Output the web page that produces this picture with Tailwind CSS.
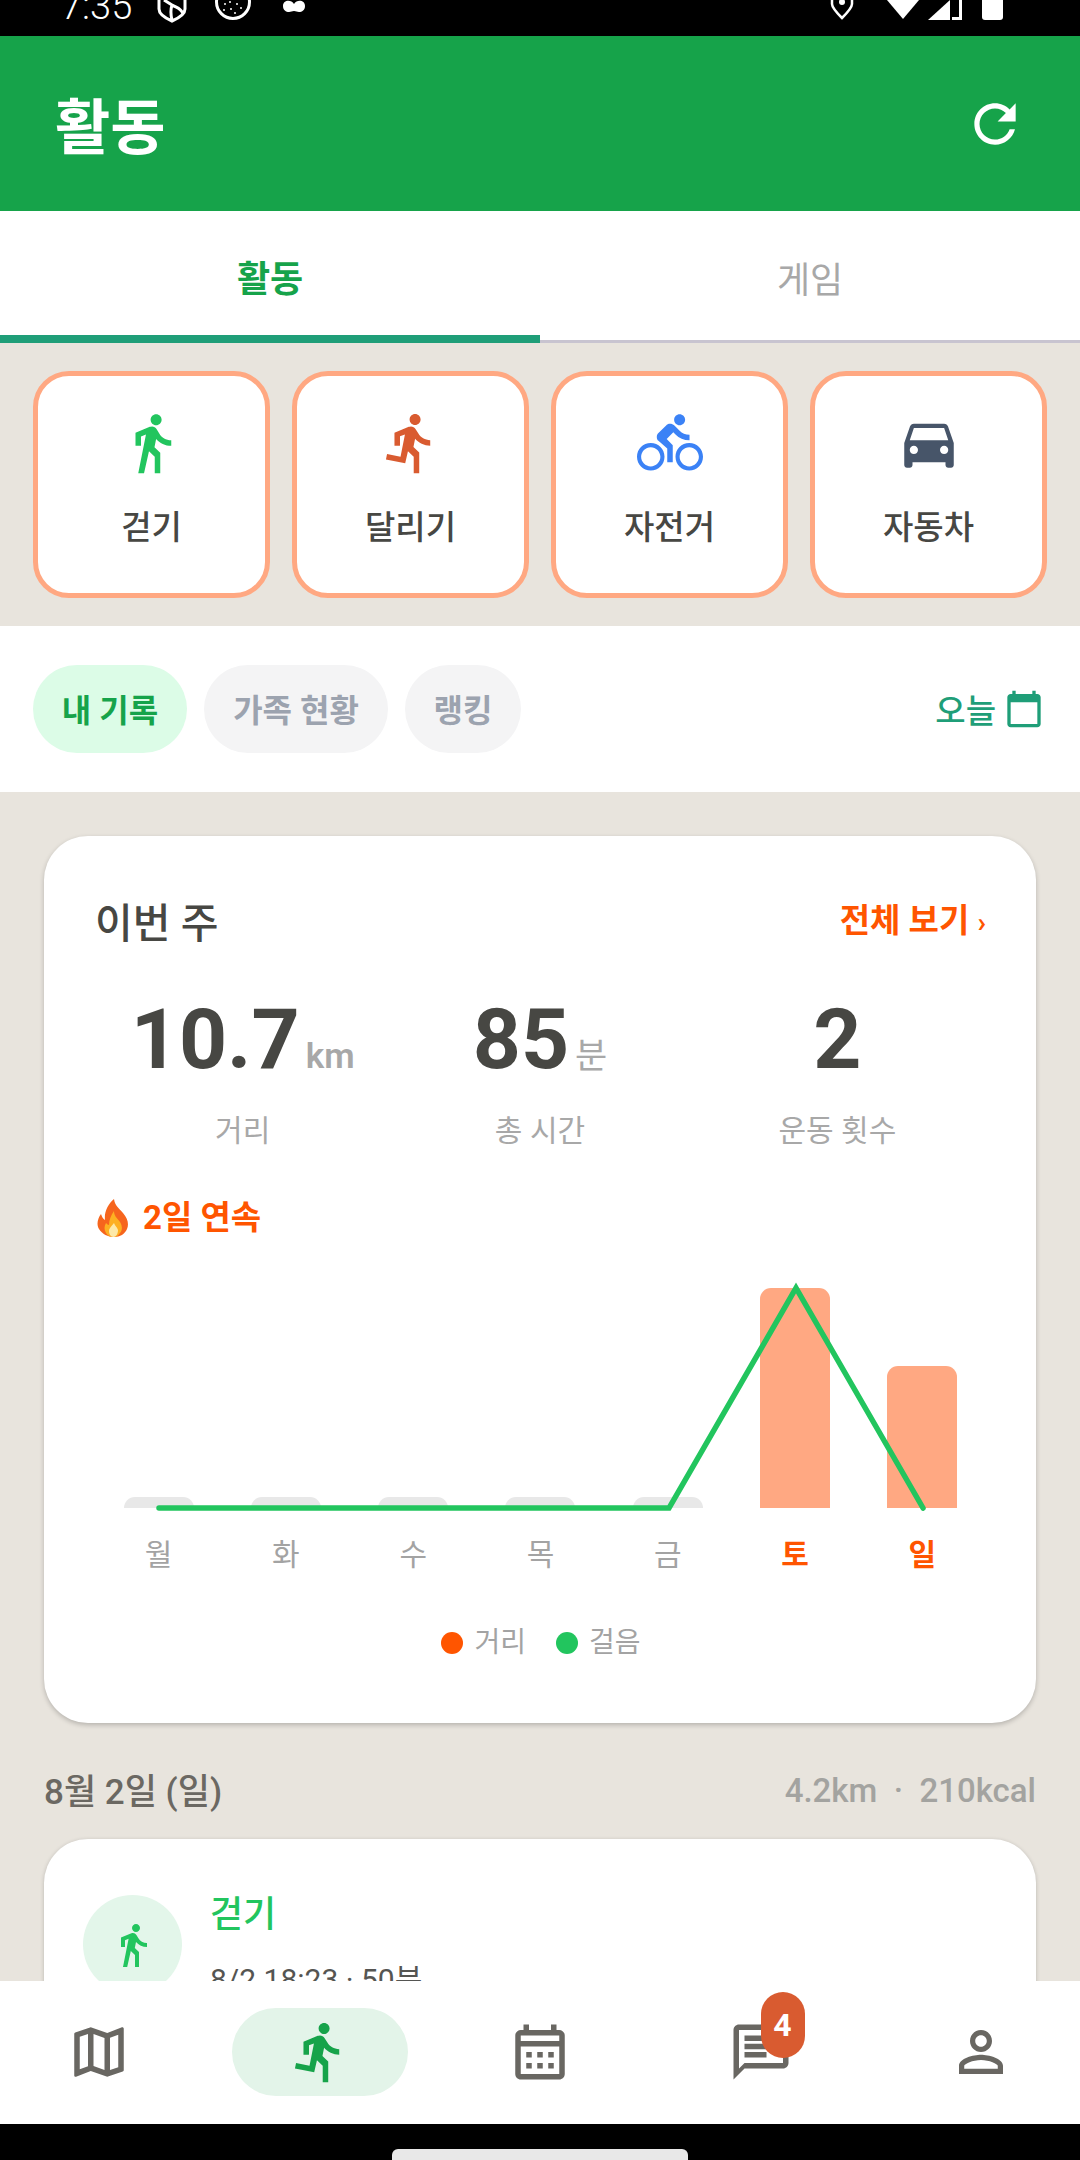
<!DOCTYPE html>
<html lang="ko">
<head>
  <meta charset="UTF-8">
  <title>활동</title>
  <script src="https://cdn.jsdelivr.net/npm/@tailwindcss/browser@4"></script>
</head>
<body class="bg-black font-[Roboto,'Noto_Sans_CJK_KR',sans-serif]">
  <div class="flex flex-col w-[1080px] h-[2160px] overflow-hidden">

    <!-- status bar -->
    <div class="h-[36px] shrink-0 bg-black flex items-start overflow-hidden text-white">
      <span class="ml-[61px] w-[96px] mt-[-16px] text-[38px] leading-[44px] font-light">7:35</span>
      <svg class="w-[30px] h-[36px]" viewBox="0 0 30 36" fill="none" stroke="white" stroke-width="3"><path d="M2 -6v15c0 5 6 9 13 12 7-3 13-7 13-12V-6M7 0l8 5c5 3 9 3 11 9M15 5c-2 6-1 11 0 15"/></svg>
      <svg class="ml-[28px] w-[36px] h-[36px]" viewBox="0 0 36 36" fill="none" stroke="white"><circle cx="18" cy="2" r="16.500" stroke-width="3"/><g fill="white" stroke="none"><circle cx="10" cy="4" r="1"/><circle cx="16" cy="9" r="1"/><circle cx="22" cy="4" r="1"/><circle cx="26" cy="8" r="1"/><circle cx="15" cy="2" r="1"/><circle cx="9" cy="10" r="1"/><circle cx="20" cy="13" r="1"/></g></svg>
      <svg class="ml-[30px] w-[26px] h-[36px]" viewBox="0 0 24 36" fill="white"><path d="M12 4C9 -1 1 0 1 6c0 4 3 6 6 6 2 0 3-1 5-1s3 1 5 1c3 0 6-2 6-6 0-6-8-7-11-2z"/></svg>
      <svg class="ml-[523px] w-[24px] h-[36px]" viewBox="0 0 24 36" fill="none" stroke="white" stroke-width="2.500"><path d="M2 -4v8c0 4 6 10 10 14 4-4 10-10 10-14v-8"/><circle cx="12" cy="2" r="3" fill="white" stroke="none"/></svg>
      <svg class="ml-[33px] w-[32px] h-[36px]" viewBox="0 0 32 36" fill="white"><path d="M0 0h32L16 19z"/></svg>
      <svg class="ml-[9px] w-[34px] h-[36px]" viewBox="0 0 34 36" fill="white"><path d="M0 20 22 0v20z"/><path d="M24 0h10v20H24v-3h7V0h-7z"/></svg>
      <svg class="ml-[20px] w-[21px] h-[36px]" viewBox="0 0 21 36" fill="white"><path d="M0 0h21v17c0 2-1 3-3 3H3c-2 0-3-1-3-3z"/></svg>
    </div>

    <!-- app bar -->
    <header class="h-[175px] shrink-0 bg-[#16a34a] flex items-center justify-between pl-[55px] pr-[54px]">
      <h1 class="pt-[10px] text-[60px] leading-none font-bold text-white">활동</h1>
      <svg class="w-[62px] h-[62px]" viewBox="0 0 24 24" fill="white"><path d="M17.65 6.35C16.2 4.9 14.21 4 12 4c-4.42 0-7.99 3.58-7.99 8s3.57 8 7.99 8c3.73 0 6.84-2.55 7.73-6h-2.08c-.82 2.33-3.04 4-5.65 4-3.31 0-6-2.69-6-6s2.69-6 6-6c1.66 0 3.14.69 4.22 1.78L13 11h7V4l-2.35 2.35z"/></svg>
    </header>

    <!-- tabs -->
    <div class="h-[132px] shrink-0 bg-white flex border-b-[3px] border-[#c8c4d0]">
      <div class="w-1/2 h-[132px] flex items-center justify-center pt-[14px] border-b-[8px] border-[#1f9e78] text-[36px] font-bold text-[#16a34a]">활동</div>
      <div class="w-1/2 h-[129px] flex items-center justify-center pt-[10px] text-[36px] text-[#a8a8a8]">게임</div>
    </div>

    <main class="flex-1 min-h-0 overflow-hidden bg-[#e8e4dd]">
      <!-- activity types -->
      <div class="grid grid-cols-4 gap-[22px] px-[33px] pt-[28px] pb-[28px]">
        <div class="h-[227px] bg-white rounded-[36px] border-[5px] border-[#ffa882] flex flex-col items-center pt-[34px]">
          <svg class="w-[66px] h-[66px]" viewBox="0 0 24 24" fill="#22c55e"><path d="M13.5 5.5c1.1 0 2-.9 2-2s-.9-2-2-2-2 .9-2 2 .9 2 2 2zM9.8 8.9L7 23h2.1l1.8-8 2.1 2v6h2v-7.5l-2.1-2 .6-3C14.8 12 16.8 13 19 13v-2c-1.9 0-3.5-1-4.3-2.4l-1-1.6c-.4-.6-1-1-1.7-1-.3 0-.5.1-.8.1L6 8.3V13h2V9.6l1.8-.7"/></svg>
          <span class="mt-[30px] text-[33px] leading-[44px] font-medium text-[#474743]">걷기</span>
        </div>
        <div class="h-[227px] bg-white rounded-[36px] border-[5px] border-[#ffa882] flex flex-col items-center pt-[34px]">
          <svg class="w-[66px] h-[66px]" viewBox="0 0 24 24" fill="#d95b30"><path d="M13.49 5.48c1.1 0 2-.9 2-2s-.9-2-2-2-2 .9-2 2 .9 2 2 2zm-3.6 13.9l1-4.4 2.1 2v6h2v-7.5l-2.1-2 .6-3c1.3 1.5 3.3 2.5 5.5 2.5v-2c-1.9 0-3.5-1-4.3-2.4l-1-1.6c-.4-.6-1-1-1.7-1-.3 0-.5.1-.8.1l-5.2 2.2v4.7h2v-3.4l1.8-.7-1.6 8.1-4.9-1-.4 2 7 1.4z"/></svg>
          <span class="mt-[30px] text-[33px] leading-[44px] font-medium text-[#474743]">달리기</span>
        </div>
        <div class="h-[227px] bg-white rounded-[36px] border-[5px] border-[#ffa882] flex flex-col items-center pt-[34px]">
          <svg class="w-[66px] h-[66px]" viewBox="0 0 24 24" fill="#3b82f6"><path d="M15.5 5.5c1.1 0 2-.9 2-2s-.9-2-2-2-2 .9-2 2 .9 2 2 2zM5 12c-2.8 0-5 2.2-5 5s2.2 5 5 5 5-2.2 5-5-2.2-5-5-5zm0 8.5c-1.9 0-3.5-1.6-3.5-3.5s1.6-3.5 3.5-3.5 3.5 1.6 3.5 3.5-1.6 3.5-3.5 3.5zm5.8-10l2.4-2.4.8.8c1.3 1.3 3 2.1 5.1 2.1V9c-1.5 0-2.7-.6-3.6-1.5l-1.9-1.9c-.5-.4-1-.6-1.6-.6s-1.1.2-1.4.6L7.8 8.4c-.4.4-.6.9-.6 1.4 0 .6.2 1.1.6 1.4L11 14v5h2v-6.2l-2.2-2.3zM19 12c-2.8 0-5 2.2-5 5s2.2 5 5 5 5-2.2 5-5-2.2-5-5-5zm0 8.5c-1.9 0-3.5-1.6-3.5-3.5s1.6-3.5 3.5-3.5 3.5 1.6 3.5 3.5-1.6 3.5-3.5 3.5z"/></svg>
          <span class="mt-[30px] text-[33px] leading-[44px] font-medium text-[#474743]">자전거</span>
        </div>
        <div class="h-[227px] bg-white rounded-[36px] border-[5px] border-[#ffa882] flex flex-col items-center pt-[34px]">
          <svg class="w-[66px] h-[66px]" viewBox="0 0 24 24" fill="#475569"><path d="M18.92 6.01C18.72 5.42 18.16 5 17.5 5h-11c-.66 0-1.21.42-1.42 1.01L3 12v8c0 .55.45 1 1 1h1c.55 0 1-.45 1-1v-1h12v1c0 .55.45 1 1 1h1c.55 0 1-.45 1-1v-8l-2.08-5.99zM6.5 16c-.83 0-1.5-.67-1.5-1.5S5.67 13 6.5 13s1.5.67 1.5 1.5S7.33 16 6.5 16zm11 0c-.83 0-1.5-.67-1.5-1.5s.67-1.5 1.5-1.5 1.5.67 1.5 1.5-.67 1.5-1.5 1.5zM5 11l1.5-4.5h11L19 11H5z"/></svg>
          <span class="mt-[30px] text-[33px] leading-[44px] font-medium text-[#474743]">자동차</span>
        </div>
      </div>

      <!-- filter chips -->
      <div class="h-[166px] bg-white flex items-center pl-[33px] pr-[36px]">
        <div class="flex gap-[17px] text-[32px] font-semibold">
          <span class="h-[88px] w-[154px] pt-[4px] flex items-center justify-center rounded-full bg-[#dcfce7] text-[#16a34a]">내 기록</span>
          <span class="h-[88px] w-[184px] pt-[4px] flex items-center justify-center rounded-full bg-[#f4f4f5] text-[#9ca3af]">가족 현황</span>
          <span class="h-[88px] w-[116px] pt-[4px] flex items-center justify-center rounded-full bg-[#f4f4f5] text-[#9ca3af]">랭킹</span>
        </div>
        <div class="ml-auto flex items-center gap-[8px] text-[33px] font-medium text-[#1f9e78]">
          <span class="pt-[6px]">오늘</span>
          <svg class="w-[40px] h-[40px]" viewBox="0 0 24 24" fill="#1f9e78"><path d="M20 3h-1V1h-2v2H7V1H5v2H4c-1.1 0-2 .9-2 2v16c0 1.1.9 2 2 2h16c1.1 0 2-.9 2-2V5c0-1.1-.9-2-2-2zm0 18H4V8h16v13z"/></svg>
        </div>
      </div>

      <!-- weekly summary -->
      <section class="mx-[44px] mt-[44px] h-[887px] bg-white rounded-[44px] shadow-[0_2px_5px_rgba(0,0,0,0.22)] px-[50px] pt-[61px]">
        <div class="flex items-center justify-between pl-[1px] h-[48px]">
          <h2 class="pt-[5px] text-[41px] leading-[48px] font-medium text-[#474743]">이번 주</h2>
          <span class="text-[33px] font-bold text-[#ff5500]">전체 보기 <span class="text-[28px]">›</span></span>
        </div>

        <div class="grid grid-cols-3 mt-[53px] text-center">
          <div class="flex items-baseline justify-center gap-[6px] h-[84px] leading-[84px]">
            <span class="text-[84px] font-bold text-[#474743]">10.7</span><span class="text-[35px] font-semibold text-[#a8a8a8]">km</span>
          </div>
          <div class="flex items-baseline justify-center gap-[6px] h-[84px] leading-[84px]">
            <span class="text-[84px] font-bold text-[#474743]">85</span><span class="text-[35px] text-[#a8a8a8]">분</span>
          </div>
          <div class="h-[84px] leading-[84px] text-[84px] font-bold text-[#474743]">2</div>
          <div class="mt-[27px] text-[30px] leading-[44px] text-[#a8a8a8]">거리</div>
          <div class="mt-[27px] text-[30px] leading-[44px] text-[#a8a8a8]">총 시간</div>
          <div class="mt-[27px] text-[30px] leading-[44px] text-[#a8a8a8]">운동 횟수</div>
        </div>

        <div class="mt-[43px] h-[44px] flex items-center gap-[13px] text-[33px] leading-[44px] font-bold text-[#ff5500] pl-[3px]">
          <svg class="w-[33px] h-[38px]" viewBox="0 0 33 38">
            <path d="M17 0c1 7 5 9 9 14 5 6 6 11 4 16-2 5-7 8-13 8S5 35 2 30c-3-5-1-11 2-15 1 3 2 5 4 6C7 13 11 5 17 0z" fill="#f6651d"/>
            <path d="M17 12c0 5 3 7 6 11 3 5 2 9 0 11-2 3-4 4-6.500 4S11 37 9 34c-2-3-2-7 0-10 1 1 2 2 3 2 0-5 2-10 5-14z" fill="#fdb022"/>
            <path d="M17 24c1 3 3 4 4 7 0 4-2 7-4.500 7S12 35 12 32c0-3 3-5 5-8z" fill="#fde9a8"/>
          </svg>
          <span>2일 연속</span>
        </div>

        <!-- chart -->
        <div class="relative mt-[48px] ml-[1px] h-[220px] grid grid-cols-7 items-end">
          <div class="mx-auto w-[70px] h-[11px] rounded-t-[11px] bg-[#e8e8e8]"></div>
          <div class="mx-auto w-[70px] h-[11px] rounded-t-[11px] bg-[#e8e8e8]"></div>
          <div class="mx-auto w-[70px] h-[11px] rounded-t-[11px] bg-[#e8e8e8]"></div>
          <div class="mx-auto w-[70px] h-[11px] rounded-t-[11px] bg-[#e8e8e8]"></div>
          <div class="mx-auto w-[70px] h-[11px] rounded-t-[11px] bg-[#e8e8e8]"></div>
          <div class="mx-auto w-[70px] h-[220px] rounded-t-[11px] bg-[#ffa882]"></div>
          <div class="mx-auto w-[70px] h-[142px] rounded-t-[11px] bg-[#ffa882]"></div>
          <svg class="absolute left-0 top-0 w-[892px] h-[220px] overflow-visible" viewBox="0 0 892 220" fill="none">
            <path d="M64 220H574L701 0 828 220" stroke="#22c55e" stroke-width="5.500" stroke-linecap="round"/>
          </svg>
        </div>
        <div class="grid grid-cols-7 mt-[25px] ml-[1px] text-center text-[30px] leading-[44px] text-[#a3a3a3]">
          <span>월</span><span>화</span><span>수</span><span>목</span><span>금</span>
          <span class="font-bold text-[#ff5500]">토</span><span class="font-bold text-[#ff5500]">일</span>
        </div>

        <div class="mt-[46px] ml-[2px] flex items-center justify-center gap-[30px] text-[28px] leading-[40px] text-[#a3a3a3]">
          <span class="flex items-center gap-[11px]"><i class="w-[22px] h-[22px] rounded-full bg-[#ff5500]"></i>거리</span>
          <span class="flex items-center gap-[11px]"><i class="w-[22px] h-[22px] rounded-full bg-[#22c55e]"></i>걸음</span>
        </div>
      </section>

      <!-- day header -->
      <div class="mx-[44px] mt-[45px] h-[50px] flex items-center justify-between">
        <span class="text-[35px] font-medium text-[#6b6862]">8월 2일 (일)</span>
        <span class="pb-[5px] text-[33px] font-medium text-[#a3a3a0]">4.2km &nbsp;·&nbsp; 210kcal</span>
      </div>

      <!-- activity row -->
      <div class="mx-[44px] mt-[21px] h-[400px] bg-white rounded-[44px] shadow-[0_1px_4px_rgba(0,0,0,0.2)] flex items-start gap-[28px] pl-[39px] pt-[54px]">
        <div class="mt-[2px] w-[99px] h-[99px] rounded-full bg-[#e3f6ea] flex items-center justify-center">
          <svg class="w-[48px] h-[48px]" viewBox="0 0 24 24" fill="#22c55e"><path d="M13.5 5.5c1.1 0 2-.9 2-2s-.9-2-2-2-2 .9-2 2 .9 2 2 2zM9.8 8.9L7 23h2.1l1.8-8 2.1 2v6h2v-7.5l-2.1-2 .6-3C14.8 12 16.8 13 19 13v-2c-1.9 0-3.5-1-4.3-2.4l-1-1.6c-.4-.6-1-1-1.7-1-.3 0-.5.1-.8.1L6 8.3V13h2V9.6l1.8-.7"/></svg>
        </div>
        <div>
          <div class="text-[36px] leading-[44px] font-medium text-[#22c55e]">걷기</div>
          <div class="mt-[21px] text-[30px] leading-[44px] text-[#555552]">8/2 18:23 · 50분</div>
        </div>
      </div>
    </main>

    <!-- bottom navigation -->
    <nav class="h-[143px] shrink-0 bg-white flex items-center justify-between pl-[66px] pr-[66px] pb-[1px]">
      <div class="w-[66px] flex justify-center">
        <svg class="w-[66px] h-[66px]" viewBox="0 0 24 24" fill="#696762"><path d="M20.5 3l-.16.03L15 5.1 9 3 3.36 4.9c-.21.07-.36.25-.36.48V20.500c0 .28.22.5.5.5l.16-.03L9 18.9l6 2.1 5.640-1.900c.21-.07.36-.25.36-.48V3.5c0-.28-.22-.5-.5-.5zM10 5.47l4 1.4v11.66l-4-1.4V5.47zm-5 .99l3-1.01v11.7l-3 1.16V6.46zm14 11.08l-3 1.01V6.86l3-1.160v11.840z"/></svg>
      </div>
      <div class="w-[66px] flex justify-center">
        <div class="shrink-0 w-[176px] h-[88px] rounded-full bg-[#e3f4e9] flex items-center justify-center">
          <svg class="w-[66px] h-[66px]" viewBox="0 0 24 24" fill="#16a34a"><path d="M13.49 5.48c1.1 0 2-.9 2-2s-.9-2-2-2-2 .9-2 2 .9 2 2 2zm-3.6 13.9l1-4.4 2.1 2v6h2v-7.5l-2.1-2 .6-3c1.3 1.5 3.3 2.5 5.5 2.5v-2c-1.9 0-3.5-1-4.3-2.4l-1-1.6c-.4-.6-1-1-1.7-1-.3 0-.5.1-.8.1l-5.2 2.2v4.7h2v-3.4l1.8-.7-1.6 8.1-4.9-1-.4 2 7 1.4z"/></svg>
        </div>
      </div>
      <div class="w-[66px] flex justify-center">
        <svg class="w-[66px] h-[66px]" viewBox="0 0 24 24" fill="#696762"><path d="M19 4h-1V2h-2v2H8V2H6v2H5c-1.11 0-1.99.9-1.99 2L3 20c0 1.1.89 2 2 2h14c1.1 0 2-.9 2-2V6c0-1.1-.9-2-2-2zm0 16H5V10h14v10zm0-12H5V6h14v2zM9 14H7v-2h2v2zm4 0h-2v-2h2v2zm4 0h-2v-2h2v2zm-8 4H7v-2h2v2zm4 0h-2v-2h2v2zm4 0h-2v-2h2v2z"/></svg>
      </div>
      <div class="relative w-[66px] flex justify-center">
        <svg class="w-[66px] h-[66px]" viewBox="0 0 24 24" fill="#696762"><path d="M20 2H4c-1.1 0-2 .9-2 2v18l4-4h14c1.1 0 2-.9 2-2V4c0-1.1-.9-2-2-2zm0 14H6l-2 2V4h16v12z"/><path d="M6 12h8v2H6zm0-3h12v2H6zm0-3h12v2H6z"/></svg>
        <span class="absolute left-[33px] top-[-27px] w-[44px] h-[66px] rounded-full bg-[#d95b30] flex items-center justify-center text-[32px] font-bold text-white">4</span>
      </div>
      <div class="w-[66px] flex justify-center">
        <svg class="w-[66px] h-[66px]" viewBox="0 0 24 24" fill="#696762"><path d="M12 5.900c1.160 0 2.100.94 2.100 2.100s-.94 2.100-2.100 2.100S9.900 9.160 9.900 8s.94-2.100 2.100-2.100m0 9c2.970 0 6.100 1.460 6.100 2.100v1.100H5.900V17c0-.64 3.130-2.100 6.100-2.100M12 4C9.790 4 8 5.790 8 8s1.790 4 4 4 4-1.790 4-4-1.790-4-4-4zm0 9c-2.670 0-8 1.340-8 4v3h16v-3c0-2.660-5.330-4-8-4z"/></svg>
      </div>
    </nav>

    <!-- system gesture bar -->
    <div class="h-[36px] shrink-0 bg-black flex justify-center items-end">
      <div class="w-[296px] h-[11px] rounded-t-[6px] bg-[#e8e8e8]"></div>
    </div>
  </div>
</body>
</html>
